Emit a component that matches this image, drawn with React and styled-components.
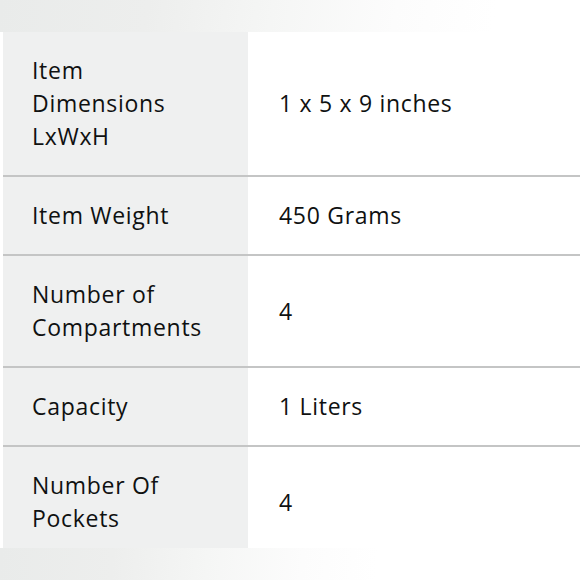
import React from 'react';
import styled, { createGlobalStyle } from 'styled-components';

const GlobalStyle = createGlobalStyle`
  html, body {
    margin: 0;
    padding: 0;
    background: #ffffff;
  }
  body {
    font-family: "Open Sans", "Noto Sans", Arial, sans-serif;
    color: #0f1111;
  }
`;

const Page = styled.div`
  width: 580px;
  height: 580px;
  overflow: hidden;
  display: flex;
  flex-direction: column;
  background: #ffffff;
`;

const Fade = styled.div`
  height: 32px;
  flex-shrink: 0;
  background: linear-gradient(
    ${({ angle }) => angle},
    #e9ebea 0%,
    #edeeed ${({ spread }) => spread * 0.3}%,
    #f5f6f5 ${({ spread }) => spread * 0.55}%,
    #fcfcfc ${({ spread }) => spread * 0.8}%,
    #ffffff ${({ spread }) => spread}%
  );
`;

const Table = styled.div`
  margin-left: 3px;
  height: 516px;
  flex-shrink: 0;
  overflow: hidden;
  display: flex;
  flex-direction: column;
`;

const Row = styled.div`
  display: grid;
  grid-template-columns: 245px 1fr;
  border-bottom: ${({ last }) => (last ? 'none' : '2px solid #c4c5c5')};
  flex-shrink: 0;
`;

const Cell = styled.div`
  display: flex;
  align-items: center;
  padding: 22px 0 22px ${({ head }) => (head ? '29px' : '31px')};
  background: ${({ head }) => (head ? '#eff0f0' : '#ffffff')};
  font-size: 23px;
  letter-spacing: 0.7px;
  line-height: 33px;
  font-weight: 400;
  color: #0f1111;
`;

const rows = [
  { label: ['Item', 'Dimensions', 'LxWxH'], value: '1 x 5 x 9 inches' },
  { label: ['Item Weight'], value: '450 Grams' },
  { label: ['Number of', 'Compartments'], value: '4' },
  { label: ['Capacity'], value: '1 Liters' },
  { label: ['Number Of', 'Pockets'], value: '4' },
];

const App = () => (
  <Page>
    <GlobalStyle />
    <Fade angle='100deg' spread={85} />
    <Table>
      {rows.map((row, i) => (
        <Row key={i} last={i === rows.length - 1}>
          <Cell head>
            <div>
              {row.label.map((line, j) => (
                <div key={j}>{line}</div>
              ))}
            </div>
          </Cell>
          <Cell>{row.value}</Cell>
        </Row>
      ))}
    </Table>
    <Fade angle='95deg' spread={65} />
  </Page>
);

export default App;
